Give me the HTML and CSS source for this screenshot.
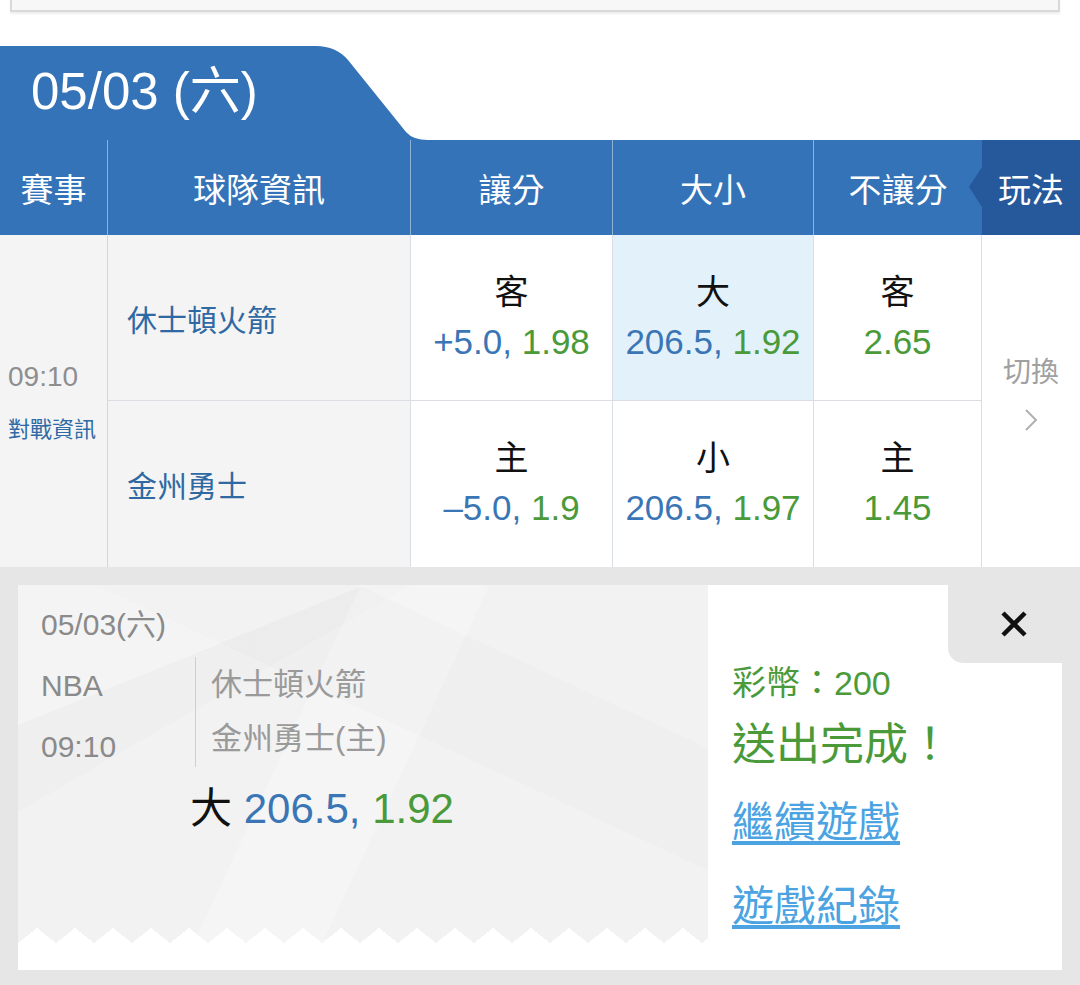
FILE: index.html
```html
<!DOCTYPE html>
<html lang="zh-Hant">
<head>
<meta charset="utf-8">
<title>NBA</title>
<link rel="stylesheet" href="styles.css">
</head>
<body>
<div class="topbox"></div>
<div class="date-tab">05/03 (六)</div>
<div class="table">
  <div class="thead">
    <div class="th">賽事</div>
    <div class="th">球隊資訊</div>
    <div class="th">讓分</div>
    <div class="th">大小</div>
    <div class="th th-last">不讓分</div>
    <div class="th th-play">玩法</div>
  </div>
  <div class="tbody">
    <div class="cell time-cell">
      <div class="time">09:10</div>
      <div class="info">對戰資訊</div>
    </div>
    <div class="cell team r1">休士頓火箭</div>
    <div class="cell odd r1"><div class="lbl">客</div><div class="val"><span class="b">+5.0,</span> <span class="g">1.98</span></div></div>
    <div class="cell odd r1 sel"><div class="lbl">大</div><div class="val"><span class="b">206.5,</span> <span class="g">1.92</span></div></div>
    <div class="cell odd r1"><div class="lbl">客</div><div class="val"><span class="g">2.65</span></div></div>
    <div class="cell switch">
      <div class="sw-text">切換</div>
      <svg class="chev" width="14" height="22" viewBox="0 0 14 22"><polyline points="2,1 12,11 2,21" fill="none" stroke="#b0b0b0" stroke-width="2"/></svg>
    </div>
    <div class="cell team">金州勇士</div>
    <div class="cell odd"><div class="lbl">主</div><div class="val"><span class="b">–5.0,</span> <span class="g">1.9</span></div></div>
    <div class="cell odd"><div class="lbl">小</div><div class="val"><span class="b">206.5,</span> <span class="g">1.97</span></div></div>
    <div class="cell odd"><div class="lbl">主</div><div class="val"><span class="g">1.45</span></div></div>
  </div>
</div>
<div class="bottom">
  <div class="panel">
    <div class="ticket">
      <div class="ticket-body">
        <div class="t-date">05/03(六)</div>
        <div class="t-match">
          <div class="t-left">
            <div class="t-line">NBA</div>
            <div class="t-line t-gap">09:10</div>
          </div>
          <div class="t-teams">
            <div class="t-line">休士頓火箭</div>
            <div class="t-line t-gap2">金州勇士(主)</div>
          </div>
        </div>
        <div class="t-bet"><span class="k">大</span> <span class="b">206.5,</span> <span class="g">1.92</span></div>
      </div>
    </div>
    <div class="result">
      <div class="close-row">
        <div class="close">
          <svg width="28" height="28" viewBox="0 0 28 28"><path d="M3 3 L25 25 M25 3 L3 25" stroke="#111" stroke-width="4.5" fill="none"/></svg>
        </div>
      </div>
      <div class="coins">彩幣：200</div>
      <div class="done">送出完成！</div>
      <a class="link l1" href="#">繼續遊戲</a>
      <a class="link l2" href="#">遊戲紀錄</a>
    </div>
  </div>
</div>
</body>
</html>
```

FILE: styles.css
```css
body {
  margin: 0;
  width: 1080px;
  height: 985px;
  overflow: hidden;
  background: #fff;
  font-family: "Liberation Sans", "Noto Sans CJK TC", sans-serif;
}

.topbox {
  height: 10px;
  margin: 0 20px 0 10px;
  background: #f7f7f7;
  border: 2px solid #d9d9d9;
  border-top: 0;
  box-shadow: 0 2px 2px rgba(0, 0, 0, 0.07);
}

.date-tab {
  margin-top: 34px;
  width: 430px;
  height: 94px;
  box-sizing: border-box;
  padding-left: 31px;
  background: #3473b7;
  clip-path: path('M0,0 H316 Q336,0 348,14 L406,86 Q413,94 428,94 H0 Z');
  color: #fff;
  font-size: 51px;
  line-height: 92px;
}

.thead,
.tbody {
  display: grid;
  grid-template-columns: 108px 303px 202px 201px 168px 98px;
}

.thead {
  height: 95px;
  background: #3473b7;
}

.th {
  display: flex;
  align-items: center;
  justify-content: center;
  color: #fff;
  font-size: 33px;
  border-right: 1px solid rgba(255, 255, 255, 0.45);
}

.th-last {
  border-right: 0;
}

.th-play {
  position: relative;
  background: #25599c;
  border-right: 0;
}

.th-play::before {
  content: "";
  position: absolute;
  left: -13px;
  top: 27px;
  border-right: 13px solid #25599c;
  border-top: 20px solid transparent;
  border-bottom: 20px solid transparent;
}

.tbody {
  grid-template-rows: 166px 166px;
}

.cell {
  box-sizing: border-box;
  border-right: 1px solid #d9dee4;
}

.r1 {
  border-bottom: 1px solid #dadde2;
}

.time-cell {
  grid-row: span 2;
  background: #f4f4f4;
  display: flex;
  flex-direction: column;
  justify-content: center;
  padding-left: 8px;
  border-right-color: #d6d6d6;
}

.time {
  font-size: 28px;
  line-height: 40px;
  color: #8e8e8e;
}

.info {
  font-size: 22px;
  line-height: 30px;
  margin-top: 18px;
  color: #2f6aa5;
}

.team {
  background: #f4f4f4;
  display: flex;
  align-items: center;
  padding-left: 19px;
  font-size: 30px;
  color: #2f69a3;
}

.odd {
  background: #fff;
  display: flex;
  flex-direction: column;
  align-items: center;
  justify-content: center;
}

.sel {
  background: #e3f1fb;
}

.lbl {
  font-size: 34px;
  line-height: 48px;
  color: #111;
}

.val {
  font-size: 35px;
  line-height: 52px;
}

.b {
  color: #3a76b5;
}

.g {
  color: #4a9a3a;
}

.switch {
  grid-column: 6;
  grid-row: 1 / span 2;
  background: #fff;
  border-right: 0;
  display: flex;
  flex-direction: column;
  align-items: center;
  justify-content: center;
  padding-bottom: 18px;
}

.sw-text {
  font-size: 28px;
  line-height: 40px;
  color: #a0a0a0;
}

.chev {
  display: block;
  margin-top: 16px;
}

.bottom {
  box-sizing: border-box;
  height: 418px;
  background: #e6e6e6;
  padding: 18px 18px 15px;
}

.panel {
  display: flex;
  height: 385px;
}

.ticket {
  width: 690px;
  background: #fff;
}

.ticket-body {
  box-sizing: border-box;
  height: 358px;
  padding: 22px 0 0 23px;
  background:
    conic-gradient(from 128.3deg at 50% 0, #fff 0 103.4deg, transparent 0) left bottom / 38px 15px repeat-x,
    linear-gradient(158deg, rgba(255, 255, 255, 0.3) 0 22%, transparent 22%),
    linear-gradient(25deg, transparent 0 58%, rgba(0, 0, 0, 0.01) 58% 76%, transparent 76%),
    linear-gradient(115deg, transparent 0 40%, rgba(255, 255, 255, 0.25) 40% 55%, transparent 55%),
    linear-gradient(-30deg, transparent 0 70%, rgba(0, 0, 0, 0.012) 70%),
    #f2f2f2;
}

.t-date {
  font-size: 30px;
  line-height: 36px;
  color: #8a8a8a;
}

.t-match {
  display: flex;
  margin-top: 14px;
  height: 110px;
}

.t-left {
  width: 154px;
  padding-top: 8px;
  color: #8a8a8a;
  font-size: 30px;
}

.t-line {
  line-height: 42px;
}

.t-gap {
  margin-top: 19px;
}

.t-teams {
  border-left: 1px solid #cfcfcf;
  padding: 7px 0 0 15px;
  color: #9a9a9a;
  font-size: 31px;
}

.t-gap2 {
  margin-top: 12px;
}

.t-bet {
  margin: 17px 0 0 149px;
  font-size: 42px;
  line-height: 50px;
}

.t-bet .k {
  color: #111;
}

.result {
  flex: 1;
  background: #fff;
  display: flex;
  flex-direction: column;
  align-items: flex-start;
  padding-left: 24px;
}

.close-row {
  align-self: stretch;
  display: flex;
  justify-content: flex-end;
}

.close {
  width: 114px;
  height: 78px;
  box-sizing: border-box;
  padding-left: 18px;
  background: #e6e6e6;
  border-bottom-left-radius: 15px;
  display: flex;
  align-items: center;
  justify-content: center;
}

.coins {
  font-size: 34px;
  line-height: 40px;
  color: #4a9a3a;
}

.done {
  margin-top: 16px;
  font-size: 44px;
  line-height: 52px;
  color: #4a9a3a;
}

.link {
  font-size: 42px;
  line-height: 50px;
  color: #4ba3e2;
  text-decoration: underline;
  text-underline-offset: 4px;
}

.l1 {
  margin-top: 27px;
}

.l2 {
  margin-top: 34px;
}
```
